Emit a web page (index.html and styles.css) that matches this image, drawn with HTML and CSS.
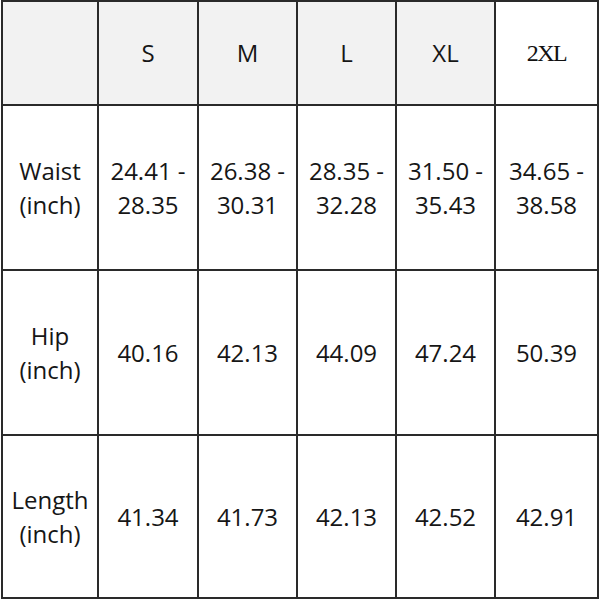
FILE: index.html
```html
<!DOCTYPE html>
<html>
<head>
<meta charset="utf-8">
<link rel="stylesheet" href="styles.css">
</head>
<body>
<div class="chart">
  <div class="cell head"></div>
  <div class="cell head">S</div>
  <div class="cell head">M</div>
  <div class="cell head">L</div>
  <div class="cell head">XL</div>
  <div class="cell head serif">2XL</div>

  <div class="cell">Waist<br>(inch)</div>
  <div class="cell">24.41 -<br>28.35</div>
  <div class="cell">26.38 -<br>30.31</div>
  <div class="cell">28.35 -<br>32.28</div>
  <div class="cell">31.50 -<br>35.43</div>
  <div class="cell">34.65 -<br>38.58</div>

  <div class="cell">Hip<br>(inch)</div>
  <div class="cell">40.16</div>
  <div class="cell">42.13</div>
  <div class="cell">44.09</div>
  <div class="cell">47.24</div>
  <div class="cell">50.39</div>

  <div class="cell">Length<br>(inch)</div>
  <div class="cell">41.34</div>
  <div class="cell">41.73</div>
  <div class="cell">42.13</div>
  <div class="cell">42.52</div>
  <div class="cell">42.91</div>
</div>
</body>
</html>
```
FILE: styles.css
```css
html, body {
  margin: 0;
  padding: 0;
  background: #ffffff;
}
.chart {
  margin-left: 1px;
  width: 598px;
  box-sizing: border-box;
  display: grid;
  grid-template-columns: 94px 98px 97px 97px 97px 101px;
  grid-template-rows: 102px 163px 163px 161px;
  gap: 2px;
  padding: 2px;
  background: #2a2a2a;
  font-family: "Open Sans", "Noto Sans", sans-serif;
  font-size: 24px;
  line-height: 34px;
  color: #161616;
}
.cell {
  background: #ffffff;
  display: flex;
  align-items: center;
  justify-content: center;
  text-align: center;
}
.head {
  background: #f2f2f2;
}
.serif {
  background: #ffffff;
  font-family: "Liberation Serif", serif;
  font-size: 24px;
  letter-spacing: -1.5px;
  color: #111;
}
```
